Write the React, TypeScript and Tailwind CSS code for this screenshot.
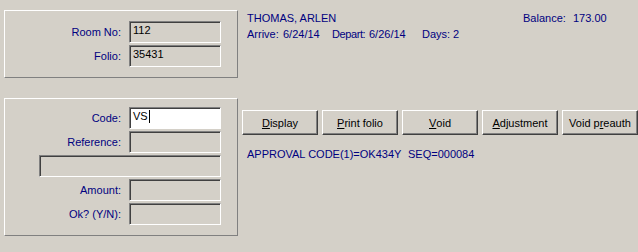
import type { ReactNode } from "react";

const font = "font-['Liberation_Sans',Arial,sans-serif] text-[11px]";

function Field({
  value,
  width = "w-[92px]",
  active = false,
}: {
  value?: string;
  width?: string;
  active?: boolean;
}) {
  return (
    <div
      className={`flex h-[22px] ${width} items-start border border-t-[#808080] border-l-[#808080] border-b-white border-r-white shadow-[inset_1px_1px_0_#404040] ${
        active ? "bg-white" : "bg-[#d4d0c8]"
      } pl-[3px] pt-[2px] leading-[13px] text-black`}
    >
      {value}
      {active && <span className="ml-[1px] h-[13px] w-px bg-black" />}
    </div>
  );
}

function Row({ label, children }: { label: string; children: ReactNode }) {
  return (
    <div className="flex items-center">
      <span className="w-[116px] pt-[1px] text-right text-[#000080]">{label}</span>
      <div className="ml-[8px]">{children}</div>
    </div>
  );
}

function Btn({ children }: { children: ReactNode }) {
  return (
    <button
      type="button"
      className="flex h-[25px] w-[76px] items-center justify-center border border-t-white border-l-white border-b-[#404040] border-r-[#404040] bg-[#d4d0c8] pt-[1px] leading-[13px] text-black shadow-[inset_-1px_-1px_0_#808080]"
    >
      {children}
    </button>
  );
}

function Panel({ children, className }: { children: ReactNode; className: string }) {
  return (
    <div
      className={`flex w-[234px] flex-col gap-[2px] border border-t-white border-l-white border-b-[#808080] border-r-[#808080] ${className}`}
    >
      {children}
    </div>
  );
}

export default function App() {
  return (
    <div className={`flex h-[252px] w-[638px] bg-[#d4d0c8] pl-[4px] pt-[10px] ${font}`}>
      {/* left column */}
      <div className="flex flex-col">
        <Panel className="h-[68px] pt-[10px]">
          <Row label="Room No:">
            <Field value="112" />
          </Row>
          <Row label="Folio:">
            <Field value="35431" />
          </Row>
        </Panel>

        <Panel className="mt-[20px] h-[138px] pt-[8px]">
          <Row label="Code:">
            <Field value="VS" active />
          </Row>
          <Row label="Reference:">
            <Field />
          </Row>
          <div className="ml-[34px]">
            <Field width="w-[182px]" />
          </div>
          <Row label="Amount:">
            <Field />
          </Row>
          <Row label="Ok? (Y/N):">
            <Field />
          </Row>
        </Panel>
      </div>

      {/* right column */}
      <div className="ml-[4px] flex flex-col">
        <div className="pl-[5px] leading-[16px] text-[#000080]">
          <div className="flex">
            <span className="w-[276px]">THOMAS, ARLEN</span>
            <span className="w-[50px]">Balance:</span>
            <span>173.00</span>
          </div>
          <div className="flex">
            <span className="w-[36px]">Arrive:</span>
            <span className="w-[49px]">6/24/14</span>
            <span className="w-[37px] tracking-[-0.4px]">Depart:</span>
            <span className="w-[53px]">6/26/14</span>
            <span className="w-[31px]">Days:</span>
            <span>2</span>
          </div>
        </div>

        <div className="mt-[68px] flex gap-[4px]">
          <Btn>
            <u>D</u>isplay
          </Btn>
          <Btn>
            <u>P</u>rint folio
          </Btn>
          <Btn>
            <u>V</u>oid
          </Btn>
          <Btn>
            <u>A</u>djustment
          </Btn>
          <Btn>
            Void p<u>r</u>eauth
          </Btn>
        </div>

        <div className="mt-[11px] flex pl-[5px] leading-[16px] text-[#000080]">
          <span className="w-[161px]">APPROVAL CODE(1)=OK434Y</span>
          <span>SEQ=000084</span>
        </div>
      </div>
    </div>
  );
}
